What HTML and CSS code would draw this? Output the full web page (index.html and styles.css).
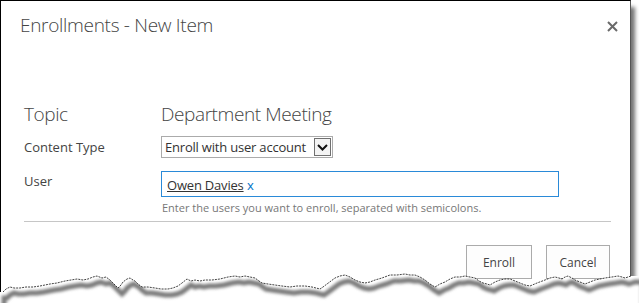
FILE: index.html
```html
<!DOCTYPE html>
<html lang="en">
<head>
  <meta charset="UTF-8" />
  <title>Enrollments - New Item</title>
  <link rel="stylesheet" href="styles.css">
</head>
<body>
  <div class="frame">
    <div class="dialog-head">
      <div class="dialog-title">Enrollments - New Item</div>
      <div class="close" title="Close">
        <svg width="11" height="11" viewBox="0 0 11 11"><path d="M1 1 L10 10 M10 1 L1 10" stroke="#6a6a6a" stroke-width="2" fill="none"/></svg>
      </div>
    </div>

    <div class="form">
      <div class="row topic">
        <div class="label">Topic</div>
        <div class="value">Department Meeting</div>
      </div>

      <div class="row">
        <div class="label">Content Type</div>
        <div class="select">
          <span class="select-text">Enroll with user account</span>
          <span class="select-arrow">
            <svg width="11" height="7" viewBox="0 0 11 7"><path d="M1 1 L5.5 5.5 L10 1" stroke="#111" stroke-width="2" fill="none"/></svg>
          </span>
        </div>
      </div>

      <div class="row user">
        <div class="label">User</div>
        <div class="field">
          <div class="people">
            <span class="person">Owen Davies</span> <span class="remove">x</span>
          </div>
          <div class="hint">Enter the users you want to enroll, separated with semicolons.</div>
        </div>
      </div>
    </div>

    <div class="separator"></div>

    <div class="buttons">
      <button class="btn">Enroll</button>
      <button class="btn">Cancel</button>
    </div>
  </div>

  <!-- Torn paper edge -->
  <svg class="torn" width="639" height="43" viewBox="0 260 639 43">
    <defs>
      <filter id="soft" x="-5%" y="-50%" width="110%" height="200%">
        <feGaussianBlur stdDeviation="1.8"/>
      </filter>
      <clipPath id="below">
        <path id="belowShape" d="M0 303 L0 292 L3 292 L6 289 L10 287 L14 288 L20 288 L26 287 L33 287 L40 286 L50 284 L57 283 L65 281 L71 280 L77 279 L83 280 L88 279 L93 277 L97 276 L102 278 L106 277 L110 280 L114 284 L118 288 L121 285 L123 282 L127 279 L130 278 L133 280 L135 281 L138 284 L142 287 L148 287 L155 288 L161 289 L168 289 L173 288 L178 286 L182 283 L187 279 L191 281 L195 280 L200 281 L205 280 L212 280 L220 279 L228 277 L235 276 L240 277 L245 276 L250 277 L255 278 L259 281 L262 283 L268 284 L275 285 L282 286 L290 287 L297 286 L305 286 L312 287 L320 289 L323 287 L327 284 L331 281 L335 278 L340 276 L345 275 L350 277 L355 280 L360 282 L365 283 L370 282 L375 280 L382 278 L390 275 L397 275 L405 274 L410 275 L415 275 L420 277 L425 280 L430 284 L435 287 L440 284 L445 282 L450 279 L455 277 L460 277 L465 276 L470 277 L475 278 L479 281 L483 283 L487 284 L490 285 L495 282 L500 280 L505 279 L510 279 L515 281 L520 283 L525 285 L530 286 L537 283 L545 280 L550 278 L555 277 L559 278 L562 279 L565 277 L568 276 L572 278 L575 280 L580 282 L585 284 L590 282 L595 280 L600 279 L605 278 L612 277 L618 276 L622 277 L625 278 L628 277 L631 276 L639 276 L639 303 Z"/>
      </clipPath>
    </defs>
    <rect x="0" y="260" width="639" height="43" fill="#fff" clip-path="url(#below)"/>
    <g clip-path="url(#below)">
      <use href="#belowShape" transform="translate(4 6)" fill="none" stroke="#7a7a7a" stroke-width="5" filter="url(#soft)"/>
    </g>
    <path class="tear" d="M3 292 L6 289 L10 287 L14 288 L20 288 L26 287 L33 287 L40 286 L50 284 L57 283 L65 281 L71 280 L77 279 L83 280 L88 279 L93 277 L97 276 L102 278 L106 277 L110 280 L114 284 L118 288 L121 285 L123 282 L127 279 L130 278 L133 280 L135 281 L138 284 L142 287 L148 287 L155 288 L161 289 L168 289 L173 288 L178 286 L182 283 L187 279 L191 281 L195 280 L200 281 L205 280 L212 280 L220 279 L228 277 L235 276 L240 277 L245 276 L250 277 L255 278 L259 281 L262 283 L268 284 L275 285 L282 286 L290 287 L297 286 L305 286 L312 287 L320 289 L323 287 L327 284 L331 281 L335 278 L340 276 L345 275 L350 277 L355 280 L360 282 L365 283 L370 282 L375 280 L382 278 L390 275 L397 275 L405 274 L410 275 L415 275 L420 277 L425 280 L430 284 L435 287 L440 284 L445 282 L450 279 L455 277 L460 277 L465 276 L470 277 L475 278 L479 281 L483 283 L487 284 L490 285 L495 282 L500 280 L505 279 L510 279 L515 281 L520 283 L525 285 L530 286 L537 283 L545 280 L550 278 L555 277 L559 278 L562 279 L565 277 L568 276 L572 278 L575 280 L580 282 L585 284 L590 282 L595 280 L600 279 L605 278 L612 277 L618 276 L622 277 L625 278 L628 277 L631 276"/>
  </svg>
</body>
</html>
```

FILE: styles.css
```css
html, body {
  margin: 0;
  padding: 0;
  background: #FFFFFF;
  font-family: "Open Sans", "Noto Sans", sans-serif;
  color: #444444;
  overflow: hidden;
}
body {
  width: 639px;
  height: 303px;
  position: relative;
}
.frame {
  width: 629px;
  height: 300px;
  border-left: 1px solid #000000;
  border-top: 1px solid #000000;
  border-right: 1px solid #555555;
  box-shadow: 4px 7px 4px rgba(0, 0, 0, 0.55);
  background: #FFFFFF;
}

/* Header */
.dialog-head {
  display: flex;
  justify-content: space-between;
  align-items: flex-start;
  padding: 12px 12px 0 19px;
  height: 90px;
  box-sizing: border-box;
}
.dialog-title {
  font-size: 19px;
  font-weight: 300;
  line-height: 24px;
  color: #444444;
  letter-spacing: -0.3px;
}
.close {
  padding-top: 2px;
  width: 11px;
  height: 11px;
}

/* Form */
.form {
  padding: 11px 0 0 23px;
  display: flex;
  flex-direction: column;
}
.row {
  display: flex;
  align-items: flex-start;
}
.label {
  width: 137px;
  flex: none;
  font-size: 13px;
  line-height: 22px;
  color: #444444;
}
.topic {
  height: 34px;
}
.topic .label,
.topic .value {
  font-size: 19px;
  font-weight: 300;
  line-height: 24px;
  color: #444444;
  letter-spacing: -0.4px;
}

.select {
  display: flex;
  align-items: center;
  justify-content: space-between;
  width: 170px;
  height: 20px;
  border: 1px solid #ababab;
  background: #FFFFFF;
}
.select-text {
  font-size: 13px;
  line-height: 20px;
  color: #333333;
  padding-left: 3px;
  letter-spacing: -0.2px;
}
.select-arrow {
  width: 17px;
  height: 18px;
  margin-right: 1px;
  border: 1px solid #707070;
  background: #F4F4F4;
  display: flex;
  align-items: center;
  justify-content: center;
  box-sizing: border-box;
}

.user {
  margin-top: 13px;
}
.user .label {
  line-height: 20px;
}
.field {
  display: flex;
  flex-direction: column;
}
.people {
  width: 391px;
  height: 24px;
  border: 1px solid #2A8AD8;
  padding-left: 5px;
  box-sizing: content-box;
  font-size: 13px;
  line-height: 26px;
  color: #333333;
}
.person {
  text-decoration: underline;
  letter-spacing: -0.2px;
}
.remove {
  color: #0072C6;
}
.hint {
  font-size: 11px;
  line-height: 16px;
  color: #777777;
  margin-top: 3px;
  padding-left: 1px;
}

.separator {
  margin: 5px 0 0 23px;
  width: 587px;
  height: 1px;
  background: #C6C6C6;
}

/* Buttons */
.buttons {
  display: flex;
  justify-content: flex-end;
  gap: 14px;
  padding: 23px 20px 0 0;
}
.btn {
  min-width: 66px;
  height: 34px;
  padding: 0 10px;
  border: 1px solid #ababab;
  background: #FDFDFD;
  font-family: "Open Sans", "Noto Sans", sans-serif;
  font-size: 12px;
  color: #444444;
  box-sizing: border-box;
}
.btn + .btn {
  min-width: 64px;
}

/* Torn edge overlay */
.torn {
  position: absolute;
  left: 0;
  top: 260px;
}
.tear {
  fill: none;
  stroke: #111111;
  stroke-width: 0.8;
  stroke-dasharray: 2 1;
}
```
